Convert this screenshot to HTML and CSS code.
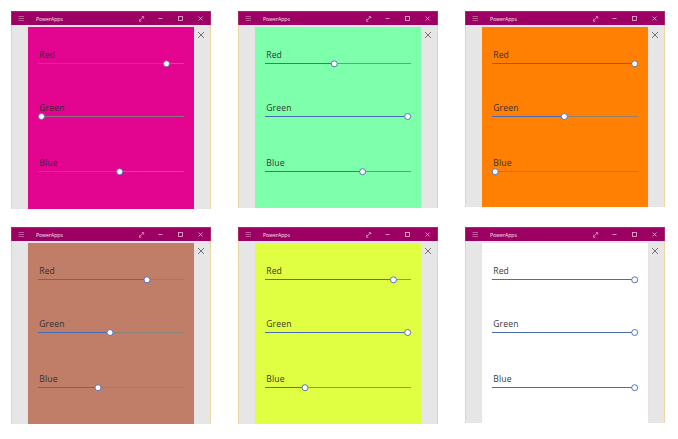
FILE: index.html
```html
<!DOCTYPE html>
<html lang="en">
<head>
<meta charset="utf-8">
<title>PowerApps</title>
<link rel="stylesheet" href="styles.css">
</head>
<body>
<main class="gallery" id="gallery"></main>
<template id="window-template">
  <section class="window">
    <header class="titlebar">
      <svg class="menu" width="6" height="6" viewBox="0 0 6 6"><path d="M.5 .5H6M.5 2.5H6M.5 4.5H6"/></svg>
      <span class="title">PowerApps</span>
      <svg class="controls" width="68" height="8" viewBox="0 0 68 8">
        <path d="M1 5.2l3-3M2.8 1.6h1.9v1.9M.4 4.3v1.9h1.9M19.5 3.5h4M59.6 1.5l4 4M63.6 1.5l-4 4"/>
        <rect x="39.5" y="1.5" width="4" height="4"/>
      </svg>
    </header>
    <div class="workspace">
      <div class="canvas"></div>
      <svg class="close" width="8" height="8" viewBox="0 0 8 8"><path d="M1 1l6 6M7 1l-6 6"/></svg>
    </div>
  </section>
</template>
<script src="app.js"></script>
</body>
</html>
```
FILE: styles.css
```css
body {
  margin: 0;
  background: #fff;
  font-family: "Open Sans", "Noto Sans", sans-serif;
}
.gallery {
  display: grid;
  grid-template-columns: repeat(3, 200px);
  grid-auto-rows: 216px;
  column-gap: 27px;
  align-items: start;
  padding: 11px 0 0 11px;
}
.window {
  display: flex;
  flex-direction: column;
  box-sizing: border-box;
  width: 200px;
}
.titlebar {
  display: flex;
  align-items: center;
  flex: none;
  box-sizing: border-box;
  height: 14px;
  padding: 0 3px 0 6px;
  background: #9c0062;
  border: 1px solid #a72c61;
  border-bottom: 0;
}
.title {
  margin-left: 12px;
  color: #f8e6f0;
  font-size: 5.2px;
  line-height: 8px;
  letter-spacing: -0.06px;
}
.menu,
.controls {
  fill: none;
  stroke: #e6b7d2;
  stroke-width: 0.8;
}
.menu {
  margin-top: 1px;
  stroke: #cf7fac;
  stroke-width: 0.7;
}
.controls {
  margin-left: auto;
}
.workspace {
  display: flex;
  flex: 1;
  min-height: 0;
  box-sizing: border-box;
  padding: 2px 0 0 15px;
  background: #e6e6e6;
  border: solid #ead5a5;
  border-width: 0 1px;
}
.canvas {
  box-sizing: border-box;
  width: 166px;
  padding: 22px 10px 0;
  margin-left: 1px;
  box-shadow: 0 0 0 1px #e9e1e6;
  clip-path: inset(-1px -1px 0);
}
.close {
  margin: 4px 0 0 2.6px;
  fill: none;
  stroke: #666;
  stroke-width: 0.9;
}
.field {
  height: 53px;
}
.field:nth-child(2) {
  height: 55px;
}
.field:nth-child(3) {
  height: 20px;
}
.label {
  height: 12px;
  padding-left: 1.2px;
  color: #292929;
  opacity: 0.92;
  font-size: 8.6px;
  line-height: 12px;
  letter-spacing: 0.15px;
}
.slider {
  display: block;
  overflow: visible;
}
.rail {
  fill: #808080;
  fill-opacity: 0.85;
}
.value {
  fill: #4a6cb5;
}
.thumb {
  fill: #fff;
  stroke: #5576bc;
  stroke-width: 1;
}
```
FILE: app.js
```js
const apps = [
  { color: "#e3058f", height: 198, values: [128.5, 3.5, 81.7] },
  { color: "#7dffab", height: 197, values: [69.3, 142.7, 97.6] },
  { color: "#ff8002", height: 196, values: [142.7, 72.3, 3.2] },
  { color: "#c07e69", height: 197, values: [109, 72, 60] },
  { color: "#e1ff42", height: 197, values: [128.5, 142.7, 40] },
  { color: "#ffffff", height: 196, values: [142.7, 142.7, 142.7] }
];
const names = ["Red", "Green", "Blue"];
const centers = [2.8, 2.5, 2.7];
const template = document.getElementById("window-template");

for (const app of apps) {
  const node = template.content.cloneNode(true);
  node.querySelector(".window").style.height = app.height + "px";
  const canvas = node.querySelector(".canvas");
  canvas.style.background = app.color;
  canvas.innerHTML = names.map((name, i) => {
    const x = app.values[i];
    const y = centers[i];
    return `<div class="field"><div class="label">${name}</div>
      <svg class="slider" width="146" height="6" viewBox="0 0 146 6">
        <rect class="rail" x="0" y="2" width="146" height="1"/>
        <rect class="value" x="0" y="2" width="${x}" height="1"/>
        <circle class="thumb" cx="${x}" cy="${y}" r="3"/>
      </svg></div>`;
  }).join("");
  document.getElementById("gallery").append(node);
}
```
